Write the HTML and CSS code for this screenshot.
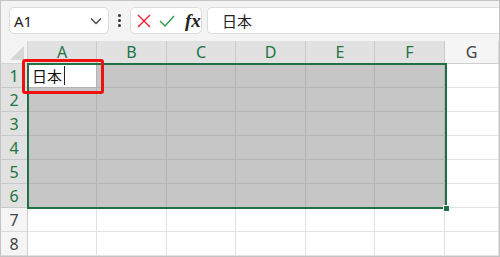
FILE: index.html
```html
<!DOCTYPE html>
<html lang="ja">
<head>
    <meta charset="UTF-8">
    <title>Excel - 日本</title>
    <link rel="stylesheet" href="styles.css">
</head>
<body>
    <div class="window">
        <div class="toolbar">
            <div class="name-box">
                <span>A1</span>
                <svg class="chevron" width="12" height="8" viewBox="0 0 12 8">
                    <path d="M1 1.5 L6 6.5 L11 1.5" fill="none" stroke="#444" stroke-width="1.3"/>
                </svg>
            </div>
            <div class="dots"><i></i><i></i><i></i></div>
            <div class="buttons">
                <svg width="14" height="14" viewBox="0 0 14 14">
                    <path d="M1 1 L13 13 M13 1 L1 13" stroke="#e8202a" stroke-width="1.4"/>
                </svg>
                <svg width="16" height="12" viewBox="0 0 16 12">
                    <path d="M1 6 L6 11 L15 1" fill="none" stroke="#2e9a4a" stroke-width="1.4"/>
                </svg>
                <span class="fx">fx</span>
            </div>
            <div class="formula">日本</div>
        </div>

        <div class="sheet">
            <div class="corner"></div>
            <div class="col-head sel">A</div>
            <div class="col-head sel">B</div>
            <div class="col-head sel">C</div>
            <div class="col-head sel">D</div>
            <div class="col-head sel">E</div>
            <div class="col-head sel">F</div>
            <div class="col-head">G</div>

            <div class="row-head sel">1</div>
            <div class="cell active"><span>日本</span><i class="caret"></i></div>
            <div class="cell sel"></div><div class="cell sel"></div><div class="cell sel"></div>
            <div class="cell sel"></div><div class="cell sel"></div><div class="cell"></div>

            <div class="row-head sel">2</div>
            <div class="cell sel"></div><div class="cell sel"></div><div class="cell sel"></div>
            <div class="cell sel"></div><div class="cell sel"></div><div class="cell sel"></div><div class="cell"></div>

            <div class="row-head sel">3</div>
            <div class="cell sel"></div><div class="cell sel"></div><div class="cell sel"></div>
            <div class="cell sel"></div><div class="cell sel"></div><div class="cell sel"></div><div class="cell"></div>

            <div class="row-head sel">4</div>
            <div class="cell sel"></div><div class="cell sel"></div><div class="cell sel"></div>
            <div class="cell sel"></div><div class="cell sel"></div><div class="cell sel"></div><div class="cell"></div>

            <div class="row-head sel">5</div>
            <div class="cell sel"></div><div class="cell sel"></div><div class="cell sel"></div>
            <div class="cell sel"></div><div class="cell sel"></div><div class="cell sel"></div><div class="cell"></div>

            <div class="row-head sel">6</div>
            <div class="cell sel"></div><div class="cell sel"></div><div class="cell sel"></div>
            <div class="cell sel"></div><div class="cell sel"></div><div class="cell sel"></div><div class="cell"></div>

            <div class="row-head">7</div>
            <div class="cell"></div><div class="cell"></div><div class="cell"></div>
            <div class="cell"></div><div class="cell"></div><div class="cell"></div><div class="cell"></div>

            <div class="row-head">8</div>
            <div class="cell"></div><div class="cell"></div><div class="cell"></div>
            <div class="cell"></div><div class="cell"></div><div class="cell"></div><div class="cell"></div>

            <div class="selection"><i class="handle"></i></div>
            <div class="highlight"></div>
        </div>
    </div>
</body>
</html>
```

FILE: styles.css
```css
* {
    box-sizing: border-box;
}
body {
    margin: 0;
    font-family: "Noto Sans", "Noto Sans CJK JP", sans-serif;
}
.window {
    width: 500px;
    height: 257px;
    border: 1px solid #c4c4c4;
    background: #f3f3f3;
    overflow: hidden;
}
.toolbar {
    height: 40px;
    display: flex;
    align-items: flex-start;
    padding: 6px 0 0 8px;
}
.name-box {
    width: 100px;
    height: 27px;
    background: #fff;
    border: 1px solid #dcdcdc;
    border-radius: 5px;
    display: flex;
    align-items: center;
    justify-content: space-between;
    padding: 0 6px 0 4px;
    font-size: 15px;
    color: #222;
}
.dots {
    width: 21px;
    height: 27px;
    display: flex;
    flex-direction: column;
    align-items: center;
    justify-content: center;
    gap: 2px;
}
.dots i {
    width: 3px;
    height: 3px;
    border-radius: 50%;
    background: #333;
}
.buttons {
    width: 72px;
    height: 27px;
    background: #fff;
    border: 1px solid #dcdcdc;
    border-radius: 5px;
    display: flex;
    align-items: center;
    padding: 0 0 0 6px;
    gap: 8px;
}
.fx {
    font-family: "Liberation Serif", "DejaVu Serif", serif;
    font-style: italic;
    font-weight: bold;
    font-size: 19px;
    color: #222;
    margin-left: 2px;
}
.formula {
    flex: 1;
    height: 27px;
    margin-left: 5px;
    background: #fff;
    border: 1px solid #dcdcdc;
    border-right: none;
    border-radius: 5px 0 0 5px;
    padding: 0 0 0 14px;
    display: flex;
    align-items: center;
    font-family: "Noto Sans CJK JP", sans-serif;
    font-size: 15px;
    color: #222;
}
.sheet {
    position: relative;
    display: grid;
    grid-template-columns: 27px 69px 70px 69px 70px 69px 70px 1fr;
    grid-template-rows: 23px repeat(8, 24px);
    background: #fff;
}
.corner {
    background: #f3f3f3;
    border-right: 1px solid #d4d4d4;
    border-bottom: 1px solid #d4d4d4;
    position: relative;
}
.corner::after {
    content: "";
    position: absolute;
    right: 3px;
    bottom: 3px;
    border-left: 14px solid transparent;
    border-bottom: 14px solid #d6d6d6;
}
.col-head,
.row-head {
    display: flex;
    align-items: center;
    justify-content: center;
    font-size: 16px;
    color: #444;
    background: #f5f5f5;
}
.col-head {
    border-right: 1px solid #dadada;
    border-bottom: 1px solid #cfcfcf;
}
.row-head {
    border-right: 1px solid #cfcfcf;
    border-bottom: 1px solid #dadada;
}
.col-head.sel,
.row-head.sel {
    background: #e1e1e1;
    color: #217346;
}
.col-head.sel {
    border-right-color: #cacaca;
    border-bottom-color: #217346;
}
.row-head.sel {
    border-bottom-color: #cacaca;
    border-right-color: #217346;
}
.cell {
    border-right: 1px solid #e2e2e2;
    border-bottom: 1px solid #e2e2e2;
}
.cell.sel {
    background: #c6c6c6;
    border-color: #b4b4b4;
}
.cell.active {
    background: #fff;
    border-color: #b4b4b4;
    display: flex;
    align-items: center;
    padding-left: 4px;
    font-family: "Noto Sans CJK JP", sans-serif;
    font-size: 15px;
    color: #111;
}
.caret {
    width: 1px;
    height: 19px;
    background: #222;
    margin-left: 2px;
}
.selection {
    position: absolute;
    left: 26px;
    top: 22px;
    width: 420px;
    height: 146px;
    border: 2px solid #1e7145;
}
.handle {
    position: absolute;
    right: -5px;
    bottom: -5px;
    width: 7px;
    height: 7px;
    background: #1e7145;
    border: 1px solid #fff;
}
.highlight {
    position: absolute;
    left: 21px;
    top: 18px;
    width: 82px;
    height: 35px;
    border: 3px solid #ee1111;
    border-radius: 3px;
}
```
